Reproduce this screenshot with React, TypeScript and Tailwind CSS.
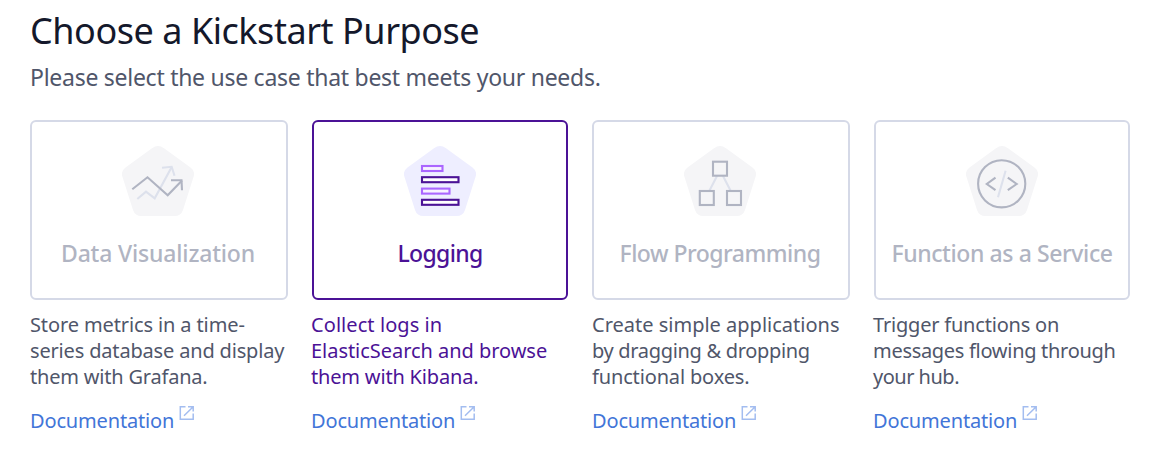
import type { ReactNode } from "react";

const PENTAGON =
  "M30 2.2Q36 -2 42 2.2L68.5 21.5Q73.500 25.200 71.500 31L61 64Q59 70 52.500 70H19.500Q13 70 11 64L0.500 31Q-1.500 25.200 3.500 21.500Z";

function Badge({ active, children }: { active?: boolean; children: ReactNode }) {
  return (
    <svg width="72" height="70" viewBox="0 0 72 70" fill="none" strokeWidth="2.1">
      <path d={PENTAGON} fill={active ? "#eeeeff" : "#f5f5f7"} />
      {children}
    </svg>
  );
}

function ChartIcon() {
  return (
    <Badge>
      <g stroke="#dde1ec">
        <path d="M15.300 53L24 45.700L32.700 52.300L49.700 21" />
        <path d="M40 21.800L49.700 20.800L52.500 29.800" />
      </g>
      <g stroke="#b0b4c2">
        <path d="M10.300 43.300L25.500 31.300L45.700 49.300L60 34.500" />
        <path d="M49 34.300H59.500L60 44.300" />
      </g>
    </Badge>
  );
}

function LogIcon() {
  return (
    <Badge active>
      <g stroke="#aa66ff" fill="#f7f2ff">
        <rect x="18" y="20" width="20.500" height="5" />
        <rect x="18" y="42.600" width="27.500" height="5" />
      </g>
      <g stroke="#4b1296" fill="#ffffff">
        <rect x="18" y="31.200" width="36.500" height="5" />
        <rect x="18" y="53.800" width="36.500" height="5" />
      </g>
    </Badge>
  );
}

function FlowIcon() {
  return (
    <Badge>
      <path stroke="#dde1ec" d="M33 30L25.500 44.500M39 30L46.500 44.500" />
      <g stroke="#b0b4c2">
        <rect x="29" y="15.700" width="14" height="14" />
        <rect x="15.800" y="45" width="14" height="14" />
        <rect x="43" y="45" width="14" height="14" />
      </g>
    </Badge>
  );
}

function CodeIcon() {
  return (
    <Badge>
      <path stroke="#dde1ec" d="M39.600 24.800L32 51.300" />
      <g stroke="#b0b4c2">
        <circle cx="35.700" cy="37.800" r="23.600" />
        <path d="M29.500 31.700L20.800 38L29.500 44.200M41.800 31.700L50.700 38L41.800 44.200" />
      </g>
    </Badge>
  );
}

function ExternalIcon() {
  return (
    <svg
      className="ml-[5px] mt-px"
      width="15"
      height="14"
      viewBox="0 0 15 14"
      fill="none"
      stroke="#a3bdf0"
      strokeWidth="1.500"
    >
      <path d="M6.500 0.800H1.300V13.200H14.200V7.500" />
      <path d="M9 0.800H14.200V5.500M14.200 0.800L5 9.800" />
    </svg>
  );
}

type Line = [text: string, tracking: string];

interface Purpose {
  title: string;
  titleClass: string;
  lines: Line[];
  icon: ReactNode;
  active?: boolean;
}

const purposes: Purpose[] = [
  {
    title: "Data Visualization",
    titleClass: "tracking-[-0.17px]",
    lines: [
      ["Store metrics in a time-", "tracking-[-0.12px]"],
      ["series database and display", "tracking-[-0.17px]"],
      ["them with Grafana.", "tracking-[-0.2px]"],
    ],
    icon: <ChartIcon />,
  },
  {
    title: "Logging",
    titleClass: "tracking-[-0.65px]",
    lines: [
      ["Collect logs in", "tracking-[0.07px]"],
      ["ElasticSearch and browse", "tracking-[-0.04px]"],
      ["them with Kibana.", "tracking-[-0.18px]"],
    ],
    icon: <LogIcon />,
    active: true,
  },
  {
    title: "Flow Programming",
    titleClass: "tracking-[-0.5px]",
    lines: [
      ["Create simple applications", "tracking-[0px]"],
      ["by dragging & dropping", "tracking-[-0.32px]"],
      ["functional boxes.", "tracking-[-0.15px]"],
    ],
    icon: <FlowIcon />,
  },
  {
    title: "Function as a Service",
    titleClass: "tracking-[-0.4px]",
    lines: [
      ["Trigger functions on", "tracking-[-0.2px]"],
      ["messages flowing through", "tracking-[-0.3px]"],
      ["your hub.", "tracking-[-0.5px]"],
    ],
    icon: <CodeIcon />,
  },
];

export default function App() {
  return (
    <main className="h-[454px] w-[1166px] overflow-hidden bg-white pl-[30px] pt-2 font-['Noto_Sans',sans-serif]">
      <h1 className="whitespace-nowrap text-[36px] leading-[46px] tracking-[-0.46px] text-[#14182b]">
        Choose a Kickstart Purpose
      </h1>
      <p className="mt-2 whitespace-nowrap text-[23px] leading-[30px] tracking-[-0.27px] text-[#50566a]">
        Please select the use case that best meets your needs.
      </p>
      <div className="mt-7 grid grid-cols-[repeat(4,257px)] gap-6">
        {purposes.map((p, i) => (
          <section key={p.title}>
            <button
              className={`flex h-[180px] flex-col items-center rounded-md border-2 pt-6 ${
                i % 2 ? "ml-px w-64" : "w-[258px] pr-0.5"
              } ${p.active ? "border-[#4b1296] text-[#4b1296]" : "border-[#d5d9e7] text-[#b0b4c2]"}`}
            >
              {p.icon}
              <span
                className={`mt-[21px] whitespace-nowrap text-[23px] font-medium leading-8 ${p.titleClass}`}
              >
                {p.title}
              </span>
            </button>
            <p
              className={`mt-3 whitespace-nowrap text-[20px] leading-[26px] ${
                p.active ? "text-[#4b1296]" : "text-[#50566a]"
              }`}
            >
              {p.lines.map(([text, tracking]) => (
                <span key={text} className={`block ${tracking}`}>
                  {text}
                </span>
              ))}
            </p>
            <a href="#" className="mt-[15px] flex text-[20px] leading-8 text-[#4275d8]">
              <span className="tracking-[-0.16px]">Documentation</span>
              <ExternalIcon />
            </a>
          </section>
        ))}
      </div>
    </main>
  );
}
